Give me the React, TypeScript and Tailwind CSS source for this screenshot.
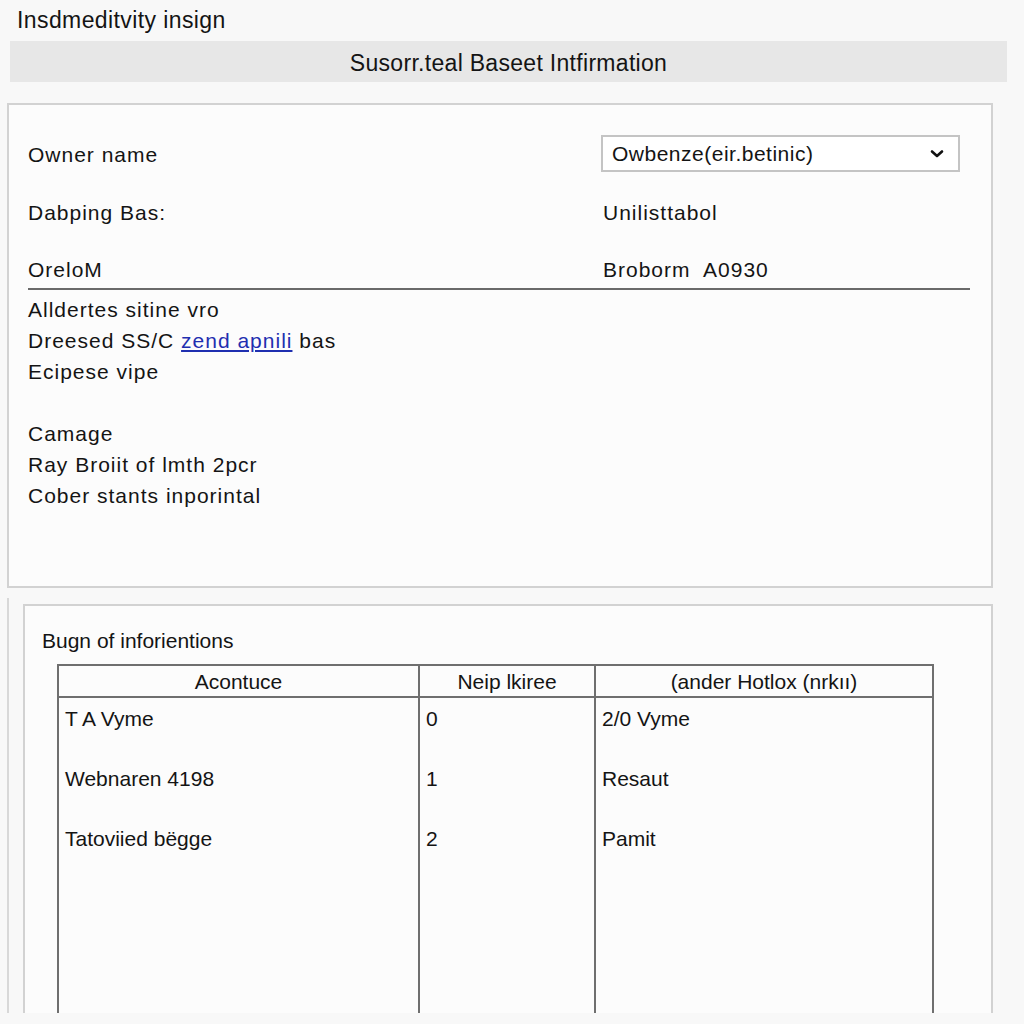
import React from 'react';

const rows = [
    { a: 'T A Vyme', b: '0', c: '2/0 Vyme' },
    { a: 'Webnaren 4198', b: '1', c: 'Resaut' },
    { a: 'Tatoviied bëgge', b: '2', c: 'Pamit' },
];

const App: React.FC = () => {
    return (
        <div className="w-[1024px] h-[1024px] overflow-hidden bg-[#f8f8f8] text-[#141414] font-['Liberation_Sans',Arial,sans-serif]">
            <div className="h-[41px] pl-[17px] pt-[4px] text-[23px] leading-[32px] tracking-[0.4px]">Insdmeditvity insign</div>

            <div className="ml-[10px] w-[997px] h-[41px] bg-[#e7e7e7] flex items-center justify-center text-[23px] tracking-[0.3px] pt-[3px]">
                Susorr.teal Baseet Intfirmation
            </div>

            <div className="mt-[21px] ml-[7px] w-[986px] h-[485px] border-2 border-[#d2d2d2] bg-[#fcfcfc] pl-[19px] pr-[21px] pt-[21px] text-[21px] tracking-[1px]">
                <div className="grid grid-cols-[573px_1fr] h-[58px] items-center">
                    <span>Owner name</span>
                    <div className="w-[359px] h-[37px] border-2 border-[#c4c4c4] bg-white flex items-center justify-between pl-[9px] pr-[14px] -mt-[3px]">
                        <span className="tracking-[0.5px]">Owbenze(eir.betinic)</span>
                        <svg width="14" height="10" viewBox="0 0 14 10" className="mt-[1px]">
                            <path d="M2 2.5 L7 7 L12 2.5" fill="none" stroke="#111" strokeWidth="2.6" strokeLinecap="round" strokeLinejoin="round" />
                        </svg>
                    </div>
                </div>
                <div className="grid grid-cols-[573px_1fr] h-[58px] items-center">
                    <span>Dabping Bas:</span>
                    <span className="pl-[2px]">Unilisttabol</span>
                </div>
                <div className="grid grid-cols-[573px_1fr] h-[48px] items-center pt-[10px] border-b-2 border-[#6a6a6a]">
                    <span>OreloM</span>
                    <span className="pl-[2px]">Broborm&nbsp; A0930</span>
                </div>
                <div className="mt-[4px] leading-[31px]">
                    <p>Alldertes sitine vro</p>
                    <p>
                        Dreesed SS/C <a className="text-[#1f2fb0] underline">zend apnili</a> bas
                    </p>
                    <p>Ecipese vipe</p>
                    <p>&nbsp;</p>
                    <p>Camage</p>
                    <p>Ray Broiit of lmth 2pcr</p>
                    <p>Cober stants inporintal</p>
                </div>
            </div>

            <div className="mt-[10px] ml-[7px] flex h-[415px]">
                <div className="w-[2px] bg-[#d8d8d8]" />
                <div className="ml-[14px] mt-[6px] w-[970px] border-2 border-b-0 border-[#d2d2d2] bg-[#fcfcfc] pl-[17px] pt-[22px] flex flex-col">
                    <div className="text-[21px] leading-[26px]">Bugn of inforientions</div>
                    <div className="ml-[15px] mt-[10px] w-[877px] flex-1 border-2 border-b-0 border-[#6f6f6f] text-[21px] flex flex-col">
                        <div className="grid grid-cols-[361px_176px_1fr] h-[32px] border-b-2 border-[#6f6f6f] text-center">
                            <div className="border-r-2 border-[#6f6f6f] flex items-center justify-center">Acontuce</div>
                            <div className="border-r-2 border-[#6f6f6f] flex items-center justify-center">Neip lkiree</div>
                            <div className="flex items-center justify-center">(ander Hotlox (nrkıı)</div>
                        </div>
                        <div className="grid grid-cols-[361px_176px_1fr] flex-1">
                            <div className="border-r-2 border-[#6f6f6f] pl-[6px] pt-[8px]">
                                {rows.map((r) => (
                                    <div key={r.a} className="h-[60px] leading-[26px]">{r.a}</div>
                                ))}
                            </div>
                            <div className="border-r-2 border-[#6f6f6f] pl-[6px] pt-[8px]">
                                {rows.map((r) => (
                                    <div key={r.b} className="h-[60px] leading-[26px]">{r.b}</div>
                                ))}
                            </div>
                            <div className="pl-[6px] pt-[8px]">
                                {rows.map((r) => (
                                    <div key={r.c} className="h-[60px] leading-[26px]">{r.c}</div>
                                ))}
                            </div>
                        </div>
                    </div>
                </div>
            </div>
        </div>
    );
};

export default App;
